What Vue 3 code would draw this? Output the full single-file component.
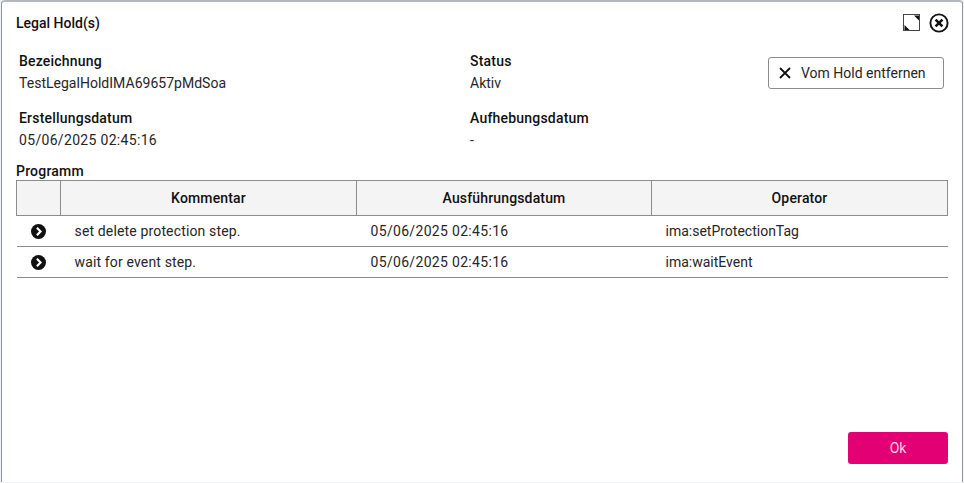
<script setup>
const rows = [
  { c: 'set delete protection step.', d: '05/06/2025 02:45:16', o: 'ima:setProtectionTag' },
  { c: 'wait for event step.', d: '05/06/2025 02:45:16', o: 'ima:waitEvent' },
]
</script>

<template>
  <div class="page">
    <div class="dialog">
      <header class="head">
        <h1>Legal Hold(s)</h1>
        <div class="tools">
          <svg width="18" height="18" viewBox="0 0 18 18">
            <rect x="0.5" y="0.5" width="16" height="16" fill="#fff" stroke="#444" />
            <path d="M16 1.5V6.5L11 1.5ZM1.5 16V11L6.5 16Z" fill="#111" />
          </svg>
          <svg width="20" height="20" viewBox="0 0 20 20">
            <circle cx="10" cy="10" r="8.6" fill="#fff" stroke="#111" stroke-width="1.9" />
            <path d="M6.6 6.6L13.4 13.4M13.4 6.6L6.6 13.4" stroke="#111" stroke-width="2.6" />
          </svg>
        </div>
      </header>
      <section class="info">
        <div class="grid">
          <div class="field">
            <b>Bezeichnung</b>
            <span class="tight">TestLegalHoldIMA69657pMdSoa</span>
          </div>
          <div class="field">
            <b>Status</b>
            <span>Aktiv</span>
          </div>
          <div class="field">
            <b>Erstellungsdatum</b>
            <span class="num">05/06/2025 02:45:16</span>
          </div>
          <div class="field">
            <b>Aufhebungsdatum</b>
            <span>-</span>
          </div>
        </div>
        <button class="remove">
          <svg width="12" height="12" viewBox="0 0 12 12">
            <path d="M1 1L11 11M11 1L1 11" stroke="#111" stroke-width="1.8" />
          </svg>
          Vom Hold entfernen
        </button>
      </section>
      <div class="section-title">Programm</div>
      <table>
        <colgroup>
          <col class="c0" /><col class="c1" /><col class="c2" /><col />
        </colgroup>
        <thead>
          <tr><th></th><th>Kommentar</th><th>Ausführungsdatum</th><th>Operator</th></tr>
        </thead>
        <tbody>
          <tr v-for="r in rows" :key="r.c">
            <td class="ic">
              <svg width="15" height="15" viewBox="0 0 14 14">
                <circle cx="7" cy="7" r="7" fill="#111" />
                <path d="M5.5 3.6L8.9 7L5.5 10.4" fill="none" stroke="#fff" stroke-width="2" />
              </svg>
            </td>
            <td class="txt">{{ r.c }}</td>
            <td class="num">{{ r.d }}</td>
            <td>{{ r.o }}</td>
          </tr>
        </tbody>
      </table>
      <footer class="foot">
        <button class="ok">Ok</button>
      </footer>
    </div>
  </div>
</template>

<style>
html, body { margin: 0; background: #f0f2f4; }
</style>

<style scoped>
.page {
  width: 964px;
  height: 483px;
  box-sizing: border-box;
  padding: 0 1px 1px 1px;
  font-family: Roboto, "Liberation Sans", sans-serif;
  font-size: 14px;
  color: #262626;
}
.dialog {
  height: 100%;
  box-sizing: border-box;
  background: #fff;
  border-top: 2px solid #b4b8bd;
  border-left: 1px solid #8f959c;
  border-right: 1px solid #8f959c;
  border-radius: 4px 4px 0 0;
  display: flex;
  flex-direction: column;
  padding: 0 14px 0 14px;
}
.head {
  height: 42px;
  display: flex;
  align-items: center;
  justify-content: space-between;
}
h1 {
  margin: 0;
  font-size: 14px;
  font-weight: 500;
  color: #111;
}
.tools { display: flex; align-items: center; gap: 8px; margin-right: -1px; }
.tools svg { display: block; }
.info { display: flex; align-items: flex-start; justify-content: space-between; padding-left: 3px; }
.grid {
  width: 700px;
  display: grid;
  grid-template-columns: 451px 1fr;
  row-gap: 12px;
  padding-top: 6px;
}
.field { display: flex; flex-direction: column; line-height: 22px; height: 45px; }
.field b { font-weight: 500; color: #111; letter-spacing: 0.2px; }
.num { letter-spacing: 0.32px; }
.txt { letter-spacing: 0.15px; }
.tight { letter-spacing: 0.02px; }
.remove {
  width: 176px;
  height: 32px;
  margin-top: 13px;
  margin-right: 4px;
  background: #fff;
  border: 1px solid #8c8c8c;
  border-radius: 3px;
  display: flex;
  align-items: center;
  gap: 10px;
  padding: 0 0 0 10px;
  font: inherit;
  color: #262626;
}
.section-title { font-weight: 500; color: #111; line-height: 18px; margin-top: 10px; letter-spacing: 0.2px; }
table {
  width: 932px;
  border-collapse: collapse;
  table-layout: fixed;
}
.c0 { width: 44px; }
.c1 { width: 296px; }
.c2 { width: 295px; }
th {
  height: 34px;
  padding: 0;
  background: #f4f4f4;
  border: 1px solid #8c8c8c;
  font-weight: 500;
  color: #111;
  text-align: center;
  letter-spacing: 0.15px;
}
td {
  height: 30px;
  padding: 0 0 0 14px;
  border-bottom: 1px solid #8c8c8c;
}
td.ic { padding: 0; text-align: center; }
td.ic svg { display: block; margin: 0 auto; }
.foot { margin-top: auto; display: flex; justify-content: flex-end; padding: 0 0 18px 0; }
.ok {
  width: 100px;
  height: 32px;
  border: 0;
  border-radius: 3px;
  background: #e20074;
  color: #fbd3e7;
  font: inherit;
}
</style>
